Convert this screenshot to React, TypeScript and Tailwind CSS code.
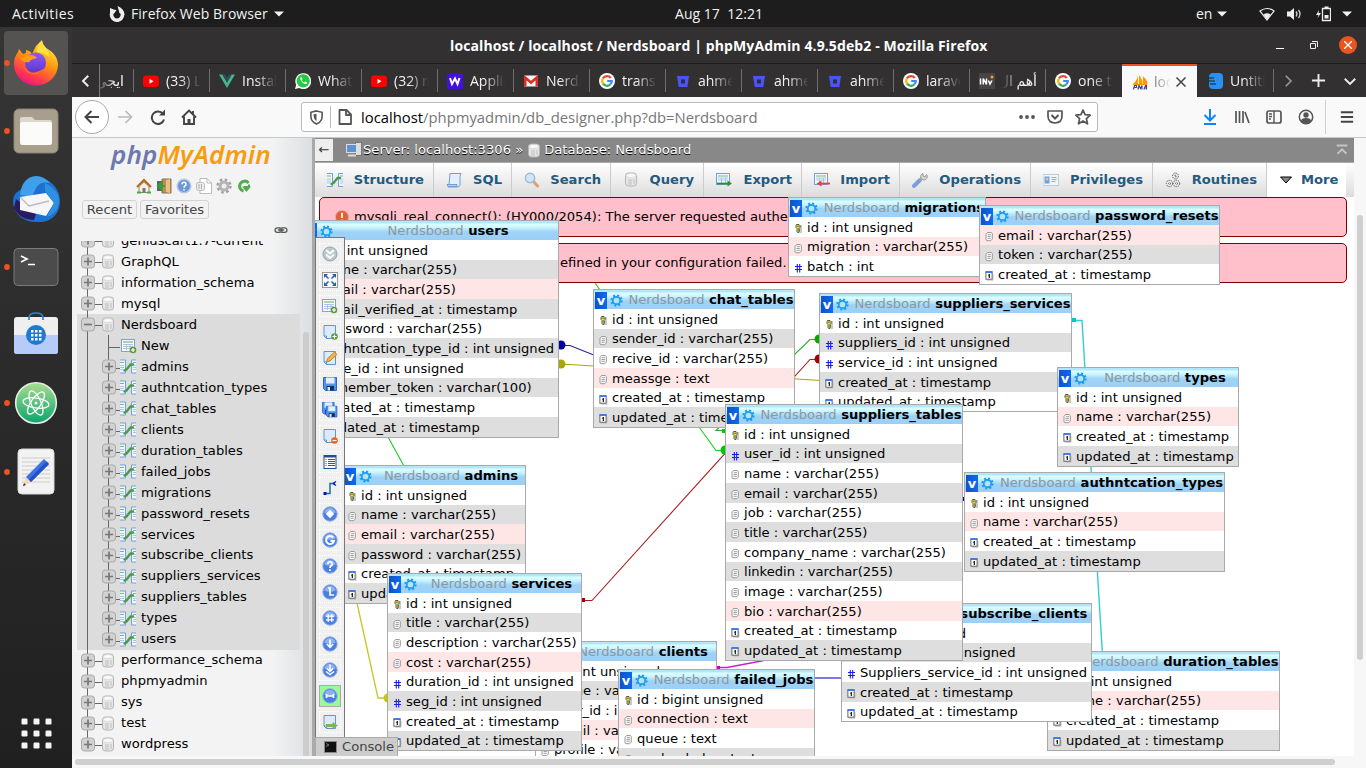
import React from "react";

const Cyl = ({ x = 0, y = 0 }: { x?: number; y?: number }) => (
  <g transform={`translate(${x} ${y})`}>
    <rect x=".5" y="1" width="11" height="13" rx="3" fill="#e6e6e6" stroke="#b5b5b5" />
    <ellipse cx="6" cy="3.5" rx="4.8" ry="2" fill="#fafafa" stroke="#cfcfcf" strokeWidth=".6" />
    <path d="M4 7v6M6 7v6M9 7v5" stroke="#c0c0c0" />
  </g>
);

const Struct = ({ x = 0, y = 0 }: { x?: number; y?: number }) => (
  <g transform={`translate(${x} ${y})`}>
    <path d="M0 1.5h5.500v13H0M16 1.500h-4.500v13H16" fill="#f2f7ff" stroke="#6f9fdc" />
    <path d="M0 4h4M13 4h3" stroke="#6cc06c" strokeWidth="1.2" />
    <path d="M0 7h4M0 9h4M0 11h4M13 7h3M13 9h3M13 11h3" stroke="#a9c4ea" />
    <path d="M4.500 12l2-1 4-5h2.500" stroke="#4a9a48" strokeWidth="2.4" fill="none" strokeLinecap="round" strokeLinejoin="round" />
  </g>
);

const NewTable = ({ x = 0, y = 0 }: { x?: number; y?: number }) => (
  <g transform={`translate(${x} ${y})`}>
    <rect x=".5" y="1.500" width="13" height="12" fill="#f7faff" stroke="#7ba3da" />
    <path d="M2 4h10" stroke="#79b879" strokeWidth="1.2" />
    <path d="M2 6.500h10M2 8.500h10M2 10.500h10M5.500 6v6M9 6v6" stroke="#9dbae3" strokeWidth=".8" />
    <circle cx="12" cy="12" r="3.300" fill="#5f9a3c" />
    <path d="M12 10v4M10 12h4" stroke="#fff" strokeWidth="1.200" />
  </g>
);

const Expander = ({ x, minus }: { x: number; minus?: boolean }) => (
  <g>
    <rect x={x} y="4" width="13" height="13" rx="3" fill="#d2d2d2" stroke="#a9a9a9" />
    <path d={minus ? `M${x + 2.500} 10.500h8` : `M${x + 2.500} 10.500h8M${x + 6.500} 6.500v8`} stroke="#777" strokeWidth="1.700" />
  </g>
);

const RootRow = ({ name, minus, last }: { name: string; minus?: boolean; last?: boolean }) => (
  <div className="flex h-[20.97px] items-center">
    <svg className="h-[21px] w-[44px] shrink-0" viewBox="0 0 44 21">
      <path d={last ? "M10.500 0v10" : "M10.500 0v21"} stroke="#666" />
      <path d="M17 11.500h8" stroke="#666" />
      <Expander x={4.500} minus={minus} />
      <Cyl x={25} y={3} />
    </svg>
    <span>{name}</span>
  </div>
);

const ChildRow = ({ name, last, fresh }: { name: string; last?: boolean; fresh?: boolean }) => (
  <div className="flex h-[20.97px] items-center">
    <svg className="h-[21px] w-[64px] shrink-0" viewBox="0 0 64 21">
      <path d={`M10.500 0v21M31.500 0v${last ? 10 : 21}`} stroke="#666" />
      <path d="M32 12.500h11" stroke="#666" />
      {fresh ? (
        <NewTable x={44} y={3} />
      ) : (
        <>
          <Expander x={25.500} />
          <Struct x={43} y={2.500} />
        </>
      )}
    </svg>
    <span>{name}</span>
  </div>
);

const children = ["admins", "authntcation_types", "chat_tables", "clients", "duration_tables", "failed_jobs", "migrations", "password_resets", "services", "subscribe_clients", "suppliers_services", "suppliers_tables", "types", "users"];

type Kind = "k" | "t" | "n" | "d";
type Tone = "w" | "g" | "p";
type Col = [Kind, string, Tone];
type Tbl = { name: string; x: number; y: number; w: number; cols: Col[] };

const id: Col = ["k", "id : int unsigned", "w"];
const ca = (t: Tone): Col => ["d", "created_at : timestamp", t];
const ua = (t: Tone): Col => ["d", "updated_at : timestamp", t];
const vc = (n: string, t: Tone): Col => ["t", n + " : varchar(255)", t];
const num = (n: string, t: Tone): Col => ["n", n + " : int unsigned", t];

const tables: Tbl[] = [
  { name: "migrations", x: 788, y: 197, w: 198, cols: [id, vc("migration", "p"), ["n", "batch : int", "w"]] },
  { name: "password_resets", x: 979, y: 205, w: 241, cols: [vc("email", "p"), vc("token", "g"), ca("w")] },
  { name: "users", x: 303, y: 220, w: 256, cols: [id, vc("name", "g"), vc("email", "p"), ["d", "email_verified_at : timestamp", "g"], vc("password", "w"), num("authntcation_type_id", "g"), num("type_id", "w"), ["t", "remember_token : varchar(100)", "g"], ca("w"), ua("g")] },
  { name: "chat_tables", x: 593, y: 289, w: 202, cols: [id, vc("sender_id", "g"), vc("recive_id", "w"), ["t", "meassge : text", "p"], ca("w"), ua("g")] },
  { name: "suppliers_services", x: 819, y: 293, w: 253, cols: [id, num("suppliers_id", "g"), num("service_id", "w"), ca("g"), ua("w")] },
  { name: "types", x: 1057, y: 367, w: 182, cols: [id, vc("name", "p"), ca("w"), ua("g")] },
  { name: "authntcation_types", x: 964, y: 472, w: 261, cols: [id, vc("name", "p"), ca("w"), ua("g")] },
  { name: "duration_tables", x: 1047, y: 651, w: 233, cols: [id, vc("name", "p"), ca("w"), ua("g")] },
  { name: "subscribe_clients", x: 841, y: 603, w: 251, cols: [id, num("clients_id", "g"), num("Suppliers_service_id", "w"), ca("g"), ua("w")] },
  { name: "suppliers_tables", x: 725, y: 404, w: 238, cols: [id, num("user_id", "g"), vc("name", "w"), vc("email", "g"), vc("job", "w"), vc("title", "g"), vc("company_name", "w"), vc("linkedin", "g"), vc("image", "w"), vc("bio", "p"), ca("w"), ua("g")] },
  { name: "clients", x: 535, y: 641, w: 182, cols: [id, vc("name", "g"), num("user_id", "w"), vc("email", "p"), vc("profile", "w")] },
  { name: "failed_jobs", x: 618, y: 669, w: 197, cols: [["k", "id : bigint unsigned", "w"], ["t", "connection : text", "p"], ["t", "queue : text", "w"], ["t", "payload : longtext", "g"]] },
  { name: "admins", x: 342, y: 465, w: 184, cols: [id, vc("name", "g"), vc("email", "p"), vc("password", "g"), ca("w"), ua("g")] },
  { name: "services", x: 387, y: 573, w: 195, cols: [id, vc("title", "g"), vc("description", "w"), vc("cost", "p"), num("duration_id", "w"), num("seg_id", "g"), ca("w"), ua("g")] },
];

const KindIcon = ({ kind }: { kind: Kind }) => (
  <svg className="mr-[3px] ml-[5px] h-[12px] w-[10px] shrink-0 translate-y-[1px]" viewBox="0 0 10 12">
    {kind === "k" && (
      <>
        <rect x="4.500" y="3" width="3.500" height="8" fill="#c9c9c9" />
        <path d="M2.500 2.500h2.500l1 1v2l-1 1v3.500l-1 .8-1-1v-3.300l-1-1v-2z" fill="#e6e04a" stroke="#333" strokeWidth=".8" />
        <path d="M4 3.500v1.500M5 8h.8" stroke="#222" strokeWidth=".8" />
      </>
    )}
    {kind === "t" && (
      <>
        <path d="M2.500 2.500h3.700l1.100 1v5.500l-1.500 1.700H1.800L1 10V4.500z" fill="#fdfdfd" stroke="#8f8f8f" strokeWidth=".9" />
        <path d="M2.800 4.700h3.200M2.500 6.500h3.300M2.500 8.300h3.300" stroke="#888" strokeWidth=".8" />
      </>
    )}
    {kind === "n" && <path d="M3.300 3v8.500M5.700 3v8.500M1 5.500h7M1 8.500h7" stroke="#1a1aff" strokeWidth="1.100" />}
    {kind === "d" && (
      <>
        <path d="M2 11.200h6V5" fill="none" stroke="#c4c4c4" />
        <rect x=".9" y="3" width="6.200" height="7.200" fill="#fff" stroke="#555" strokeWidth=".9" />
        <path d="M.5 3h7" stroke="#2f74f5" strokeWidth="1.700" />
        <path d="M4.300 5v4M3.300 6.300h1" stroke="#000" strokeWidth="1.100" />
      </>
    )}
  </svg>
);

const tone = { w: "bg-white", g: "bg-[#dedede]", p: "bg-[#ffe6e6]" };

const DesignerTable = ({ t }: { t: Tbl }) => (
  <div className="absolute border border-[#a9a9a9] bg-white" style={{ left: t.x - 315, top: t.y - 197, width: t.w }}>
    <div className="flex h-[19px] items-center bg-[linear-gradient(#b4e6fb_0,#b4e6fb_2px,#dcffff_3px,#cdf6ff_6px,#9ed3f7_11px,#9ccff5_19px)]">
      <div className="mt-[2px] ml-[1px] flex h-[17px] w-[12px] shrink-0 items-center justify-center bg-[linear-gradient(90deg,#1450c8,#0a6cf0)] text-[13px] leading-none font-bold text-white">v</div>
      <svg className="mt-[2px] ml-[3px] h-[13px] w-[13px] shrink-0" viewBox="0 0 13 13">
        <circle cx="6.500" cy="6.500" r="5" fill="none" stroke="#1b9cf0" strokeWidth="2.200" strokeDasharray="1.960 1.960" />
        <circle cx="6.500" cy="6.500" r="3.700" fill="#b4e2fb" stroke="#1b9cf0" strokeWidth="1.700" />
      </svg>
      <div className="min-w-0 flex-1 pl-[5px] text-center font-bold whitespace-nowrap text-black">
        <span className="font-normal text-[#8f979c]">Nerdsboard</span> {t.name}
      </div>
    </div>
    {t.cols.map(([k, s, c]) => (
      <div key={s} className={`flex h-[19.680px] items-center whitespace-nowrap ${tone[c]}`}>
        <KindIcon kind={k} />
        <span className="pt-[1px]">{s}</span>
      </div>
    ))}
  </div>
);

const Relations = () => (
  <svg className="absolute top-0 left-0 h-[559px] w-[1039px]" viewBox="315 197 1039 559" fill="none" strokeWidth="1.100">
    <path d="M561 345.500h9L955 499.500h9" stroke="#2020a8" />
    <circle cx="561" cy="345" r="4.500" fill="#0000aa" />
    <rect x="961" y="497" width="4" height="4" fill="#0000aa" />
    <path d="M561 364.500h9L1048 395h9" stroke="#aaaa10" />
    <circle cx="561" cy="364" r="4.500" fill="#a8a800" />
    <path d="M819 339.500h-9L716 430.500h9" stroke="#20b020" />
    <circle cx="819" cy="339" r="4.500" fill="#00aa00" />
    <rect x="722" y="429" width="4" height="4" fill="#00c800" />
    <path d="M584 600.500h8L810 359.500h9" stroke="#aa2020" />
    <circle cx="819" cy="359" r="4.500" fill="#aa0000" />
    <rect x="581" y="598" width="4" height="4" fill="#aa0000" />
    <path d="M595 283L716 450.500h9" stroke="#20c820" />
    <circle cx="725" cy="450" r="4.500" fill="#00c800" />
    <path d="M388 437L404 466" stroke="#20c820" />
    <path d="M357 603L378 698h9" stroke="#c8c820" strokeWidth="1.300" />
    <circle cx="388" cy="698" r="4.500" fill="#c8c800" />
    <path d="M718 667.500h9L772 659" stroke="#c820c8" strokeWidth="1.400" />
    <rect x="716" y="666" width="4" height="4" fill="#c800c8" />
    <path d="M815 678h27" stroke="#7a7ae0" strokeWidth="2" />
    <path d="M1073 320.500h9L1102.500 655" stroke="#30d0d0" strokeWidth="1.400" />
    <rect x="1072" y="318" width="4" height="4" fill="#00c8c8" />
  </svg>
);

const Page = () => <path d="M2 1.500h11.500v13H4.500l-2.500-2.500zM2 12l2.500 2.500V12z" fill="#dcebfb" stroke="#5f94d4" />;
const Ball = ({ children }: { children?: React.ReactNode }) => (
  <>
    <circle cx="8" cy="8" r="7.200" fill="#4a7fe0" stroke="#8fabe0" strokeWidth="1" />
    <path d="M2.300 6.500a5.900 5.900 0 0 1 11.400 0q-5.700 2.500-11.400 0z" fill="#8db2f3" />
    <g fill="none" stroke="#fff" strokeWidth="1.700">{children}</g>
  </>
);
const Disk = () => (
  <>
    <path d="M1.500 1.500h13v13h-11l-2-2z" fill="#4f94f0" stroke="#2b66c4" />
    <rect x="4" y="1.500" width="8.500" height="6" fill="#e4f0ff" />
    <rect x="4.500" y="10" width="7.500" height="4.500" fill="#16305e" />
    <rect x="5.500" y="11" width="2.500" height="3.500" fill="#dfe9f8" />
  </>
);

const tools: React.ReactNode[] = [
  <><circle cx="8" cy="8" r="7" fill="#bcc6cd" stroke="#97a2aa" /><path d="M4 4l4 3.500L12 4M4 8.500l4 3.500 4-3.500" fill="none" stroke="#fff" strokeWidth="2" /></>,
  <><rect x=".5" y=".5" width="15" height="15" fill="#f6f8fb" stroke="#999" /><path d="M2 6V2h4zM10 2h4v4zM2 10v4h4zM14 10v4h-4z" fill="#2d5ea5" /><path d="M3 3l3.500 3.500M13 3L9.500 6.500M3 13l3.500-3.500M13 13L9.500 9.500" stroke="#2d5ea5" strokeWidth="1.500" /></>,
  <NewTable />,
  <><Page /><circle cx="12.500" cy="12.500" r="3.300" fill="#5f9a3c" /><path d="M12.500 10.500v4M10.500 12.500h4" stroke="#fff" strokeWidth="1.200" /></>,
  <><Page /><path d="M4.500 12l1-3.500L12.500 2l2.500 2.500L8 11z" fill="#f3b440" stroke="#b9791a" strokeWidth=".8" /></>,
  <Disk />,
  <><g transform="translate(-1 -1) scale(.9)"><Disk /></g><g transform="translate(3 3) scale(.82)"><Disk /></g></>,
  <><Page /><circle cx="12.500" cy="12.500" r="3.300" fill="#e8641b" /><path d="M10.500 12.500h4" stroke="#fff" strokeWidth="1.200" /></>,
  <><rect x="2" y="1.500" width="12" height="13" fill="#fff" stroke="#1c4fa0" /><path d="M2 2.500h12" stroke="#1c4fa0" strokeWidth="2" /><path d="M6 5.500h7M6 7.500h7M6 9.500h7M6 11.500h7" stroke="#456" /><path d="M3.500 5.500h1M3.500 7.500h1M3.500 9.500h1M3.500 11.500h1" stroke="#26c" /></>,
  <><path d="M3 13.500h5v-10h5" fill="none" stroke="#1a6aa0" strokeWidth="1.500" /><rect x="1.500" y="12" width="3" height="3" fill="#0a10c0" /><path d="M11 3.500l3-2M11 3.500l3 2" stroke="#0a10c0" strokeWidth="1.300" /></>,
  <Ball><path d="M8 5l3 3-3 3-3-3z" fill="#fff" /></Ball>,
  <Ball><path d="M11.200 5.500A4 4 0 1 0 12 9H8.500" strokeWidth="2" /></Ball>,
  <Ball><path d="M5.800 6a2.200 2.200 0 1 1 3 2Q8 8.500 8 10M8 11.200V13" /></Ball>,
  <Ball><path d="M6 4h2v7h4" /></Ball>,
  <Ball><path d="M6.200 4v8M9.800 4v8M4 6.200h8M4 9.800h8" strokeWidth="1.200" /></Ball>,
  <Ball><path d="M8 3.500v7.500M4.800 8L8 11.200l3.200-3.200" /></Ball>,
  <Ball><path d="M8 2.500v6.500M5 6.500L8 9.500l3-3M4 9.500l4 3 4-3" strokeWidth="1.500" /></Ball>,
  <Ball><path d="M4.500 6v4M11.500 6v4M5 8h6" /></Ball>,
  <><Page /><path d="M4 11.500h8" stroke="#7fb356" strokeWidth="3" /><path d="M10.500 8l5.500 3.500-5.500 3.500z" fill="#7fb356" /></>,
];

const sheet = <><rect x=".5" y="1.500" width="13" height="11" fill="#f4f9ff" stroke="#6d9fd8" /><path d="M2 4h10" stroke="#79b879" /><path d="M2 6h10M2 8h10M5.500 6v5M9.500 6v5" stroke="#9dbae3" strokeWidth=".8" /></>;

const navIcons: React.ReactNode[] = [
  <Struct />,
  <><path d="M4 1.500h11l-1 3v9l-2 1.500H2l1-2z" fill="#e4effc" stroke="#6d9fd8" /><path d="M1 12.500h10v2H2z" fill="#b8d3f3" stroke="#6d9fd8" /></>,
  <><path d="M9.500 9.500l4 4.500" stroke="#dba56b" strokeWidth="3" strokeLinecap="round" /><circle cx="6" cy="6" r="4.700" fill="#cfe5fb" stroke="#9ab8da" strokeWidth="1.400" /></>,
  <Cyl x={2} />,
  <>{sheet}<path d="M1 11.500h11" stroke="#2f8f2f" strokeWidth="1.800" /><path d="M11.500 8.500l4.500 3-4.500 3z" fill="#2f8f2f" /></>,
  <>{sheet}<path d="M6 11.500h10" stroke="#ec4040" strokeWidth="1.800" /><path d="M7.500 8.500l-5 3 5 3z" fill="#ec4040" /></>,
  <><path d="M2 14l6-6" stroke="#7d9fd9" strokeWidth="4" strokeLinecap="round" /><path d="M8 8l2.500-2.500" stroke="#aaa" strokeWidth="3" /><path d="M14.500 2.500a3.300 3.300 0 1 1-3.500-1L11 4l2 1z" fill="#d8d8d8" stroke="#999" /></>,
  <><rect x="0" y="2.500" width="15.500" height="11" fill="#f1f6fb" stroke="#bcd" /><rect x="1.500" y="4.500" width="5" height="7" fill="#6aa2e8" /><circle cx="4" cy="7" r="1.500" fill="#f2b98c" /><path d="M8.500 5.500h5M8.500 7.500h5M8.500 9.500h4" stroke="#9ab" /></>,
  <g fill="#e8e8e8" stroke="#555" strokeDasharray="1.300 1"><circle cx="10.500" cy="4" r="3" /><circle cx="4.500" cy="11.500" r="3.200" /><circle cx="11.500" cy="11.500" r="3.200" /><circle cx="10.500" cy="4" r=".8" /><circle cx="4.500" cy="11.500" r="1" /><circle cx="11.500" cy="11.500" r="1" /></g>,
];
const navItems: [string, string][] = [
  ["Structure", "w-[119px]"], ["SQL", "w-[78px]"], ["Search", "w-[99px]"], ["Query", "w-[93px]"], ["Export", "w-[98px]"], ["Import", "w-[98px]"], ["Operations", "w-[131px]"], ["Privileges", "w-[122px]"], ["Routines", "w-[114px]"],
];

const YT = () => <><rect x="0" y="2.500" width="16" height="11.500" rx="3" fill="#f00" /><path d="M6.500 5.800v5l4-2.500z" fill="#fff" /></>;
const Goo = () => (
  <>
    <circle cx="8" cy="8" r="8" fill="#fff" />
    <g fill="none" strokeWidth="2.200">
      <path d="M11.800 5A4.800 4.800 0 0 0 4 5.300" stroke="#ea4335" />
      <path d="M4 5.300a4.800 4.800 0 0 0 0 5.400" stroke="#fbbc05" />
      <path d="M4 10.700a4.800 4.800 0 0 0 7.200.8" stroke="#34a853" />
      <path d="M11.200 11.500A4.800 4.800 0 0 0 12.800 8H8.200" stroke="#4285f4" />
    </g>
  </>
);
const Bucket = () => <><path d="M2 3h12l-1.700 11H3.700z" fill="#4b55f5" /><rect x="6" y="6.500" width="4" height="4" fill="#2c2a50" /></>;
const tabs: [React.ReactNode, string][] = [
  [<YT />, "(33) L"],
  [<><path d="M0 1.500h3.500L8 9.500l4.500-8H16L8 15z" fill="#41b883" /><path d="M3.300 1.500H6.300L8 4.500l1.700-3h3L8 9.600z" fill="#35495e" /></>, "Instal"],
  [<><path d="M0 16l1.200-4.200A8 8 0 1 1 4.200 15z" fill="#fff" /><circle cx="8.200" cy="7.800" r="6.600" fill="#25c943" /><path d="M5.500 4.500c-1.500 1.500 3 7.500 6 6.500l.8-1.500-2-1-1 1C8 9 7 8 6.700 7l.8-.8-.8-2z" fill="#fff" /></>, "Whats"],
  [<YT />, "(32) m"],
  [<><rect width="16" height="16" rx="2" fill="#4310e0" /><path d="M3 5l2 6 3-5.500L10.500 11l2-6" stroke="#fff" strokeWidth="2" fill="none" /></>, "Applic"],
  [<><rect x="1" y="2.500" width="14" height="11" fill="#f5f5f5" /><path d="M2.200 13.500V4.500L8 9.500l5.800-5v9" fill="none" stroke="#d93025" strokeWidth="2.600" /></>, "Nerds"],
  [<Goo />, "transl"],
  [<Bucket />, "ahme"],
  [<Bucket />, "ahme"],
  [<Bucket />, "ahme"],
  [<Goo />, "larave"],
  [<><rect width="16" height="16" fill="#454545" /><path d="M1.500 5.500v6M4.200 11.500V5.500l3.300 6v-6M9.500 7.500l1.500 3.500 2-3.500" stroke="#fff" strokeWidth="1.500" fill="none" /><circle cx="13" cy="4" r="1.500" fill="#f5a623" /></>, "أهم ال"],
  [<Goo />, "one to"],
];

const I = ({ c, children, vb = "0 0 16 16" }: { c?: string; children: React.ReactNode; vb?: string }) => (
  <svg className={`shrink-0 ${c || "h-4 w-4"}`} viewBox={vb} fill="none">{children}</svg>
);

const Caret = () => <I c="h-[6px] w-[10px]" vb="0 0 10 6"><path d="M0 .5h10L5 5.500z" fill="#f2f2f2" /></I>;

const ui = "font-['Open_Sans','Noto_Sans','DejaVu_Sans',sans-serif]";

const TopBar = () => (
  <div className={`flex h-[27px] shrink-0 items-center bg-[#1d1d1d] text-[14px] text-[#f2f2f2] ${ui}`}>
    <span className="w-[97px] pl-[12px] tracking-[0.450px]">Activities</span>
    <I c="h-4 w-4 ml-[12px]"><path d="M4.500 4.500a5.500 5.500 0 1 0 7 0" stroke="#eee" strokeWidth="3.600" /><path d="M1 9.500V2l3.500 1.500 3 .5-2 3zM8.500 0c4 1.500 7 5 7 9l-5-2z" fill="#eee" /></I>
    <span className="ml-[6px] w-[137px] tracking-[0.050px] whitespace-nowrap">Firefox Web Browser</span>
    <span className="ml-[6px] flex h-[27px] items-center"><Caret /></span>
    <span className="ml-[391px] w-[90px] tracking-[0.030px] whitespace-pre">Aug 17  12:21</span>
    <span className="ml-[431px] w-[21px]">en</span>
    <Caret />
    <I c="ml-[32px] h-[14px] w-[16px]" vb="0 0 16 14"><path d="M1 4Q8-1 15 4L8 13z" stroke="#eee" strokeWidth="1.200" /><path d="M4.500 7.500Q8 5 11.500 7.500L8 13z" fill="#eee" /></I>
    <I c="ml-[12px] h-[14px] w-[16px]" vb="0 0 16 14"><path d="M0 4.500h3L7 1v12L3 9.500H0z" fill="#eee" /><path d="M9 4.500q2 2.500 0 5M11.500 3q3 4 0 8" stroke="#ccc" strokeWidth="1.300" /></I>
    <I c="ml-[13px] h-[16px] w-[15px]" vb="0 0 15 16"><path d="M3 4L0 9h2.500L1.500 12 5 7H2.500z" fill="#eee" /><path d="M6.500 2.500h8v12h-8z" stroke="#eee" strokeWidth="1.300" /><path d="M8.500 0.500h4v2h-4zM8.500 9h4v3.500h-4z" fill="#eee" /></I>
    <span className="ml-[11px] flex h-[27px] items-center"><Caret /></span>
  </div>
);

const DockItem = ({ dot, active, children }: { dot?: boolean; active?: boolean; children: React.ReactNode }) => (
  <div className="flex h-[64px] w-[72px] items-center">
    <div className={`h-[6px] w-[4px] shrink-0 ${dot ? "" : "opacity-0"}`}>
      <svg className="relative z-10 ml-[4px] h-[6px] w-[6px] overflow-visible" viewBox="0 0 6 6"><circle cx="3" cy="3" r="2.900" fill="#e95420" /></svg>
    </div>
    <div className={`flex h-[64px] w-[64px] items-center justify-center rounded-[4px] ${active ? "bg-[#545352]" : ""}`}>
      <svg className="h-[48px] w-[48px]" viewBox="0 0 48 48" fill="none">{children}</svg>
    </div>
  </div>
);

const Dock = () => (
  <div className="flex w-[72px] shrink-0 flex-col gap-[4.100px] bg-[linear-gradient(#363535,#202020)] pt-[4px]">
    <DockItem dot active>
      <defs>
        <linearGradient id="ff" x1=".8" y1="0" x2=".3" y2="1"><stop stopColor="#fff44f" /><stop offset=".45" stopColor="#ff980e" /><stop offset=".8" stopColor="#ff3750" /><stop offset="1" stopColor="#e31587" /></linearGradient>
        <linearGradient id="ffp" x1="0" y1="0" x2="0" y2="1"><stop stopColor="#9059ff" /><stop offset="1" stopColor="#5b37c4" /></linearGradient>
        <linearGradient id="atom" x1="0" y1="0" x2="0" y2="1"><stop stopColor="#a8dd90" /><stop offset="1" stopColor="#0aa56c" /></linearGradient>
      </defs>
      <path d="M2 25c0-6 2-9 4-12l1-3 4 5 3-1V11q5 1 6 4l4-8L30 1l2 7c8 4 14 9 14 18a22 21 0 0 1-44-1z" fill="url(#ff)" />
      <circle cx="23.500" cy="24" r="10.500" fill="url(#ffp)" />
      <path d="M8 19l10-3q5 0 7 3-6 1-8 4-6 1-9-4z" fill="#ff9a1c" />
      <path d="M28 3c5 3 9 9 9 15-4-4-8-4-12-5q0-6 3-10z" fill="#ffe23d" />
      <path d="M10 24c2 13 17 15 23 5-5 2-9 6-15 4-4-2-7-5-8-9z" fill="#ff6a2a" />
    </DockItem>
    <DockItem dot>
      <rect x="2" y="2" width="44" height="44" rx="5" fill="#a79f8c" stroke="#8b8373" />
      <path d="M8 12q0-2 2-2h10l3 3h15q2 0 2 2v4H8z" fill="#ddd8cc" />
      <rect x="8" y="15" width="32" height="23" rx="2.500" fill="#fbfbfa" />
    </DockItem>
    <DockItem>
      <path d="M4 18L22 4c14-3 26 8 26 22S38 47 28 47C12 48 2 40 1 27q0-6 3-9z" fill="#1e6fd0" />
      <path d="M8 20Q10 2 24 1q8 0 14 7-10-2-14 5l-4 9z" fill="#3ea0ea" />
      <path d="M2 33q6 12 20 12l2-6L4 24z" fill="#2a1a5e" />
      <path d="M8 22l26-4 8 10-8 13L8 35z" fill="#f6f6f8" />
      <path d="M8 22l9 9 20-5" stroke="#bbb" strokeWidth="1.300" />
      <path d="M33 16l9 12-7 14c9-3 12-10 12-16 0-9-6-14-14-18z" fill="#2f8fe0" />
    </DockItem>
    <DockItem dot>
      <rect x="2" y="5.500" width="44" height="37" rx="4" fill="#4b4b4b" stroke="#7b7b7b" />
      <path d="M9 13l6 3-6 3M16 21.500h7" stroke="#fff" strokeWidth="1.700" />
    </DockItem>
    <DockItem>
      <rect x="2" y="6" width="44" height="37" rx="3" fill="#efefef" />
      <path d="M2 24h44v16q0 3-3 3H5q-3 0-3-3z" fill="#b7cbfa" />
      <path d="M17 9V7q0-5 7-5t7 5v2" stroke="#2b83d6" strokeWidth="1.700" />
      <circle cx="24" cy="24" r="10" fill="#1c7ad4" />
      <g fill="#fff"><path d="M19 19h2.500v2.500H19zM23 19h2.500v2.500H23zM27 19h2.500v2.500H27zM19 23h2.500v2.500H19zM23 23h2.500v2.500H23zM27 23h2.500v2.500H27zM19 27h2.500v2.500H19zM23 27h2.500v2.500H23zM27 27h2.500v2.500H27z" /></g>
    </DockItem>
    <DockItem dot>
      <circle cx="24" cy="24" r="20.300" fill="url(#atom)" stroke="#e5ece5" strokeWidth="1.600" />
      <g stroke="#fff" strokeWidth="1.300"><ellipse cx="24" cy="24" rx="13" ry="5" transform="rotate(8 24 24)" /><ellipse cx="24" cy="24" rx="13" ry="5" transform="rotate(66 24 24)" /><ellipse cx="24" cy="24" rx="13" ry="5" transform="rotate(125 24 24)" /></g>
      <circle cx="24" cy="24" r="1.500" fill="#fff" />
    </DockItem>
    <DockItem dot>
      <rect x="6" y="1" width="36" height="45" rx="4" fill="#f2f2f2" stroke="#d8d8d8" />
      <path d="M10 10h28M10 14h28M10 18h28M10 22h28M10 26h28M10 30h28M10 34h28" stroke="#ccc" />
      <path d="M11 38l3-9 5 5z" fill="#f5d7b5" /><path d="M11 38l1-3 2 2z" fill="#333" />
      <path d="M14 29L32 11l5 5L19 34z" fill="#3a72e8" /><path d="M17 31.500L34.500 13.500l2.500 2.500L19 34z" fill="#2450c0" />
    </DockItem>
    <div className="mt-auto flex h-[50px] justify-center">
      <svg className="h-[31px] w-[31px]" viewBox="0 0 31 31" fill="#f4f4f4">
        {[0, 12, 24].map((x) => [0, 12, 24].map((y) => <rect key={x + "-" + y} x={x + 0.500} y={y + 0.500} width="6" height="6" rx="1.200" />))}
      </svg>
    </div>
  </div>
);

const TabStrip = () => (
  <div className="flex h-[34px] shrink-0 items-center border-t border-[#1d1b1b] bg-[#323031] text-[14px] text-[#f2f2f2]">
    <div className="flex h-[33px] w-[28px] items-center justify-center border-r border-[#7d7b7c]"><I c="h-3 w-3"><path d="M11 1L4 8l7 7" stroke="#eee" strokeWidth="2.600" /></I></div>
    <div className="flex h-[23px] w-[34px] items-center justify-end overflow-hidden border-r border-[#706e6f] pr-[9px]"><span className="whitespace-nowrap [mask-image:linear-gradient(90deg,transparent,#000_20px)]">ايجي</span></div>
    {tabs.map(([ic, s], i) => (
      <div key={i} className={`flex h-[23px] w-[76px] shrink-0 items-center pl-[9px] ${i < 12 ? "border-r border-[#706e6f]" : ""}`}>
        <I>{ic}</I>
        <span className={`ml-[7px] w-[35px] overflow-hidden whitespace-nowrap ${i === 11 ? "[direction:rtl] [mask-image:linear-gradient(270deg,#000_50%,transparent)]" : "[mask-image:linear-gradient(90deg,#000_40%,transparent)]"}`}>{s}</span>
      </div>
    ))}
    <div className="flex h-[33px] w-[75px] shrink-0 items-center border-t-2 border-[#e95420] bg-[#f9f9fa] pl-[10px] text-[#444]">
      <I><path d="M6 1v9H1q4-3 5-9zM7 1q4 5 3.500 9H7zM11 2q5 5 4.500 8H11z" fill="#f90" /><path d="M1 10.500h14" stroke="#f90" /><path d="M1.500 15.500l1-4h2v2h-2M6 15.500l1-4 1.500 3 1.500-3v4M12 15.500l1.500-4h1v4M12 14h3" stroke="#3a4a90" strokeWidth="1.200" /></I>
      <span className="ml-[6px] w-[17px] overflow-hidden text-[#888] [mask-image:linear-gradient(90deg,#000_20%,transparent)]">localhost</span>
      <I c="ml-[4px] h-[12px] w-[12px]"><path d="M2 2l12 12M14 2L2 14" stroke="#444" strokeWidth="2" /></I>
    </div>
    <div className="flex h-[23px] w-[77px] shrink-0 items-center border-r border-[#706e6f] pl-[11px]">
      <I><rect x="1" y="0" width="14" height="16" rx="4" fill="#2b8ff0" /><path d="M0 5h6M0 8h7M2 11h6" stroke="#123" /></I>
      <span className="ml-[6px] w-[35px] overflow-hidden whitespace-nowrap [mask-image:linear-gradient(90deg,#000_40%,transparent)]">Untitle</span>
    </div>
    <I c="ml-[8px] h-3 w-3"><path d="M5 1l7 7-7 7" stroke="#999" strokeWidth="2.200" /></I>
    <I c="ml-[17px] h-[15px] w-[15px]"><path d="M8 1v14M1 8h14" stroke="#eee" strokeWidth="2" /></I>
    <I c="ml-[18px] h-[12px] w-[12px]"><path d="M1 5l7 7 7-7" stroke="#eee" strokeWidth="2.400" /></I>
  </div>
);

const UrlRow = () => (
  <div className="flex h-[41px] shrink-0 items-center border-b border-[#c8c8c8] bg-[#f9f9fa]">
    <div className="ml-[3px] flex h-[34px] w-[34px] items-center justify-center rounded-full border border-[#aaa] bg-white"><I><path d="M15 8H2M7.500 2L1.500 8l6 6" stroke="#444" strokeWidth="2" /></I></div>
    <I c="ml-[8px] h-4 w-4"><path d="M1 8h13M8.500 2L14.500 8l-6 6" stroke="#bbb" strokeWidth="1.700" /></I>
    <I c="ml-[17px] h-4 w-4"><path d="M13 5A6.200 6.200 0 1 0 14 10.500" stroke="#444" strokeWidth="2" /><path d="M15 .5v6H9z" fill="#444" /></I>
    <I c="ml-[15px] h-4 w-4"><path d="M1 8.500L8 1.500l7 7M3 7.500V15h10V7.500M12 2v3" stroke="#444" strokeWidth="1.900" /><path d="M6.500 10h3v5h-3z" fill="#444" /></I>
    <div className="ml-[104px] flex h-[30px] w-[797px] items-center rounded-[3px] border border-[#b9b9ba] bg-white">
      <I c="ml-[7px] h-[15px] w-[15px]"><path d="M8 1l6 1.500V7q0 5.500-6 8-6-2.500-6-8V2.500z" stroke="#555" strokeWidth="1.700" /><path d="M8 4v8q-3-2-3-5V4.500z" fill="#555" /></I>
      <div className="ml-[6px] h-[22px] w-px bg-[#bbb]" />
      <I c="ml-[6px] h-[16px] w-[16px]"><path d="M3 1h6.500L14 5.500V15H2.500V1zM9 1v5h5" stroke="#555" strokeWidth="1.800" strokeLinejoin="round" /></I>
      <span className="ml-[8px] text-[14.820px] whitespace-nowrap text-[#777]"><span className="text-black">localhost</span>/phpmyadmin/db_designer.php?db=Nerdsboard</span>
      <I c="ml-auto h-[16px] w-[16px]"><circle cx="2" cy="8" r="1.900" fill="#555" /><circle cx="8" cy="8" r="1.900" fill="#555" /><circle cx="14" cy="8" r="1.900" fill="#555" /></I>
      <I c="ml-[12px] h-[16px] w-[16px]"><path d="M1 2h14v5q0 6.500-7 7-7-.5-7-7z" stroke="#555" strokeWidth="1.700" strokeLinejoin="round" /><path d="M4.500 6L8 9.500 11.500 6" stroke="#555" strokeWidth="2" /></I>
      <I c="mr-[6px] ml-[12px] h-[16px] w-[16px]"><path d="M8 1l2.100 4.700 5.100.5-3.800 3.400 1.100 5.200L8 12.100l-4.500 2.700 1.100-5.200L.8 6.200l5.100-.5z" stroke="#555" strokeWidth="1.700" strokeLinejoin="round" /></I>
    </div>
    <I c="ml-[104px] h-[16px] w-[16px]"><path d="M8 0v11M2.500 6L8 11.500 13.500 6M2 15h12" stroke="#0a84ff" strokeWidth="2" /></I>
    <I c="ml-[16px] h-[16px] w-[16px]"><path d="M2 2v12M5.500 2v12M9 2v12M11 3l4 11" stroke="#555" strokeWidth="1.700" /></I>
    <I c="ml-[16px] h-[16px] w-[16px]"><rect x="1" y="2" width="14" height="12" rx="2" stroke="#555" strokeWidth="1.700" /><path d="M8 2v12M3 5h3M3 7.500h3M3 10h2" stroke="#555" strokeWidth="1.400" /></I>
    <I c="ml-[16px] h-[16px] w-[16px]"><circle cx="8" cy="8" r="6.700" stroke="#555" strokeWidth="1.500" /><circle cx="8" cy="6" r="2.700" fill="#555" /><path d="M3 12q0-3 5-3t5 3-5 2.500T3 12z" fill="#555" /></I>
    <div className="ml-[11px] h-[34px] w-px bg-[#d0d0d0]" />
    <I c="ml-[14px] h-[14px] w-[14px]"><path d="M1 2.500h14M1 8h14M1 13.500h14" stroke="#444" strokeWidth="2.200" /></I>
  </div>
);

const Sidebar = () => (
  <div className="flex w-[239px] shrink-0 flex-col bg-[linear-gradient(90deg,#f3f3f3_0,#f3f3f3_200px,#dcdfe2_239px)]">
    <div className="h-[37px] pl-[39px] font-['Noto_Sans','Open_Sans',sans-serif] text-[26px] leading-[33px] font-semibold tracking-[0.120px] whitespace-nowrap italic"><span className="text-[#6c78af]">php</span><span className="text-[#f89c0e]">MyAdmin</span></div>
    <div className="mt-[3px] ml-[64px] flex h-[16px] gap-[4px]">
      <I><path d="M1 9l7-7 7 7" stroke="#b5651d" strokeWidth="2" /><path d="M3 8.500v6h10v-6L8 4z" fill="#f5efe0" stroke="#987" /><path d="M6.500 15v-5h3v5z" fill="#777" /><path d="M1 14.500h4M11 14.500h4" stroke="#4a4" strokeWidth="2" /></I>
      <I><path d="M6 1h9v14H6z" fill="#c98a4b" stroke="#875" /><path d="M10 2l4-1v14l-4-1z" fill="#e8c08a" /><path d="M7 3v10H1V3z" fill="#567" /><path d="M9 8H4M6 4.500L2 8l4 3.500z" stroke="#3c9a3c" strokeWidth="2" fill="#3c9a3c" /></I>
      <I><circle cx="8" cy="8" r="6.800" fill="#6b97d6" stroke="#b4c9e8" strokeWidth="1.500" /><path d="M6 6.200a2 2 0 1 1 2.800 1.900Q8 8.500 8 9.700M8 11v1.500" stroke="#fff" strokeWidth="1.600" /></I>
      <I><path d="M4 .5h7L15.500 5v10.500H4z" fill="#fff" stroke="#bbb" /><path d="M11 .5V5h4.500" stroke="#bbb" /><rect x=".5" y="4.500" width="8" height="8" rx="2" fill="#eee" stroke="#bbb" /><path d="M3 6v5M5.500 6v5" stroke="#aaa" /></I>
      <I><circle cx="8" cy="8" r="6.500" stroke="#a0a0a0" strokeWidth="2.300" strokeDasharray="2.550 2.550" /><circle cx="8" cy="8" r="4" stroke="#b4b4b4" strokeWidth="3" fill="#eee" /></I>
      <I><path d="M12.500 5A5 5 0 1 0 7.500 13" stroke="#55aa50" strokeWidth="3" /><path d="M6 8.500h9l-4.500 5.500z" fill="#55aa50" /><path d="M8 9h5V6.500" stroke="#55aa50" strokeWidth="2" /></I>
    </div>
    <div className="mt-[6px] ml-[10px] flex h-[19px] gap-[3px] text-[13.120px] text-[#444]">
      <div className="flex w-[55px] items-center justify-center rounded-[3px] border border-[#d3d3d3] bg-[#f2f2f2]">Recent</div>
      <div className="flex w-[69px] items-center justify-center rounded-[3px] border border-[#d3d3d3] bg-[#f2f2f2]">Favorites</div>
    </div>
    <div className="flex h-[22px] items-end justify-end pr-[23px] pb-[4px]"><I c="h-[14px] w-[14px]"><path d="M7 5.500H3.800a2.600 2.600 0 0 0 0 5.200H7zM9 5.500h3.200a2.600 2.600 0 0 1 0 5.200H9z" stroke="#555" strokeWidth="1.500" /><path d="M4.500 8h7" stroke="#555" strokeWidth="1.600" /></I></div>
    <div className="flex min-h-0 flex-1 overflow-hidden">
      <div className="w-[228px] overflow-hidden pl-[5px] text-[13.120px] text-black">
        <div className="-mt-[10.700px]">
          <RootRow name="geniuscart1.7-current" />
          <RootRow name="GraphQL" />
          <RootRow name="information_schema" />
          <RootRow name="mysql" />
          <div className="bg-[#dcdcdc]">
            <RootRow name="Nerdsboard" minus />
            <ChildRow name="New" fresh />
            {children.map((c, i) => <ChildRow key={c} name={c} last={i === children.length - 1} />)}
          </div>
          <RootRow name="performance_schema" />
          <RootRow name="phpmyadmin" />
          <RootRow name="sys" />
          <RootRow name="test" />
          <RootRow name="wordpress" last />
        </div>
      </div>
      <div className="ml-[3px] mt-[91px] w-[6px] rounded-t-full bg-[#cdcdcd]" />
    </div>
  </div>
);

const Notice = ({ children, c }: { children: React.ReactNode; c: string }) => (
  <div className={`mx-[4px] mr-[7px] flex h-[40px] items-center rounded-[5px] border border-[#800000] bg-[#ffc0cb] whitespace-nowrap ${c}`}>{children}</div>
);

const Main = () => (
  <div className="flex w-[1039px] shrink-0 flex-col overflow-hidden bg-white">
    <div className="flex h-[24px] shrink-0 items-center bg-[#888] text-[13.120px] text-white [text-shadow:0_1px_0_#000]">
      <div className="flex h-[22px] w-[18px] items-center justify-center bg-[#eee] text-[#333] [text-shadow:none]">←</div>
      <I c="ml-[13px] h-4 w-4"><rect x="9.500" y=".5" width="6" height="13" fill="#ddd" stroke="#777" /><rect x=".5" y="2.500" width="10" height="8" fill="#5e92d6" stroke="#dedede" /><path d="M2 13.500h8" stroke="#ddd" strokeWidth="2" /></I>
      <span className="ml-[1px] whitespace-nowrap">Server: localhost:3306 »</span>
      <I c="ml-[5px] h-[15px] w-[12px]" vb="0 0 12 15"><Cyl /></I>
      <span className="ml-[4px] whitespace-nowrap">Database: Nerdsboard</span>
      <I c="mr-[6px] ml-auto h-[12px] w-[12px]"><path d="M1 2h14M2 13l6-6 6 6" stroke="#c4c4c4" strokeWidth="2.400" /></I>
    </div>
    <div className="flex h-[35px] shrink-0 border-t border-[#aaa] bg-[linear-gradient(#fff,#dcdcdc)] text-[13.120px] font-bold text-[#235a81]">
      {navItems.map(([s, w], i) => (
        <div key={s} className={`flex shrink-0 items-center border-r border-[#ccc] ${w}`}>
          <I c="ml-[12px] h-4 w-4">{navIcons[i]}</I>
          <span className="flex-1 pr-[9px] text-right">{s}</span>
        </div>
      ))}
      <div className="flex w-[79px] items-center bg-white">
        <I c="ml-[13px] h-[8px] w-[12px]" vb="0 0 12 8"><path d="M.5 1h11L6 7z" fill="#888" stroke="#000" /></I>
        <span className="ml-[9px]">More</span>
      </div>
    </div>
    <div className="relative min-h-0 flex-1 text-[13.120px] text-black">
      <Notice c="mt-0 pl-[15px]">
        <I c="h-[14px] w-[14px]"><circle cx="8" cy="8" r="7.500" fill="#e0603c" stroke="#f3a48c" /><path d="M8 3v6M8 11v2" stroke="#fff" strokeWidth="2" /></I>
        <span className="ml-[5px]">mysqli_real_connect(): (HY000/2054): The server requested authe</span>
      </Notice>
      <Notice c="mt-[6px] pl-[15px]">
        <span className="w-[790px] pl-[225px]">efined in your configuration failed.</span>
      </Notice>
      <Relations />
      {tables.map((t) => <DesignerTable key={t.name} t={t} />)}
      <div className="absolute top-[40px] left-0 flex w-[30px] flex-col items-center gap-[4px] border border-[#777] bg-[#f0f0f0] pt-[5px] pb-[5px]">
        {tools.map((t, i) => (
          <div key={i} className={`flex h-[22px] w-[22px] items-center justify-center border ${i === 17 ? "border-[#aaa] bg-[#98fb98]" : "border-dotted border-white"}`}>
            <I>{t}</I>
          </div>
        ))}
      </div>
      <div className="absolute bottom-0 left-0 flex h-[19px] w-[83px] items-center border border-b-0 border-[#aaa] bg-[#ccc] pl-[8px] text-[#444]">
        <I c="h-[12px] w-[13px]" vb="0 0 13 12"><rect x=".5" y=".5" width="12" height="11" fill="#111" stroke="#888" /><path d="M2 2.500l3 1.500-3 1.500" stroke="#777" /></I>
        <span className="ml-[5px]">Console</span>
      </div>
    </div>
  </div>
);

export default function App() {
  return (
    <div className="flex h-[768px] w-[1366px] flex-col overflow-hidden bg-white font-['DejaVu_Sans',sans-serif]">
      <TopBar />
      <div className="flex min-h-0 flex-1">
        <Dock />
        <div className="flex w-[1294px] flex-col">
          <div className={`flex flex-col ${ui}`}>
            <div className="flex h-[36px] items-center bg-[#323031] text-[14px] text-white">
              <span className="ml-[378px] w-[538px] font-bold tracking-[0.110px] whitespace-nowrap">localhost / localhost / Nerdsboard | phpMyAdmin 4.9.5deb2 - Mozilla Firefox</span>
              <I c="ml-[288px] h-[10px] w-[8px]" vb="0 0 8 10"><path d="M0 8.500h8" stroke="#fff" /></I>
              <I c="ml-[26px] h-[8px] w-[8px]" vb="0 0 8 8"><path d="M.5 2.500h5v5h-5zM2 .5h5.500V6" stroke="#eee" /></I>
              <div className="ml-[21px] flex h-[18px] w-[18px] items-center justify-center rounded-full bg-[#e95420]"><I c="h-2 w-2" vb="0 0 8 8"><path d="M0 0l8 8M8 0L0 8" stroke="#fff" strokeWidth="1.300" /></I></div>
            </div>
            <TabStrip />
            <UrlRow />
          </div>
          <div className="flex min-h-0 flex-1">
            <Sidebar />
            <div className="w-[4px] shrink-0 border-l border-[#ddd] bg-[#aaa]" />
            <Main />
            <div className="flex w-[12px] shrink-0 justify-center bg-[#f7f7f7] pt-[77px]"><div className="h-[445px] w-[6px] rounded-full bg-[#cfcfcf]" /></div>
          </div>
          <div className="h-[12px] shrink-0 bg-[#f7f7f7] pt-[3px] pl-[3px]"><div className="h-[6px] w-[1260px] rounded-full bg-[#cfcfcf]" /></div>
        </div>
      </div>
    </div>
  );
}
